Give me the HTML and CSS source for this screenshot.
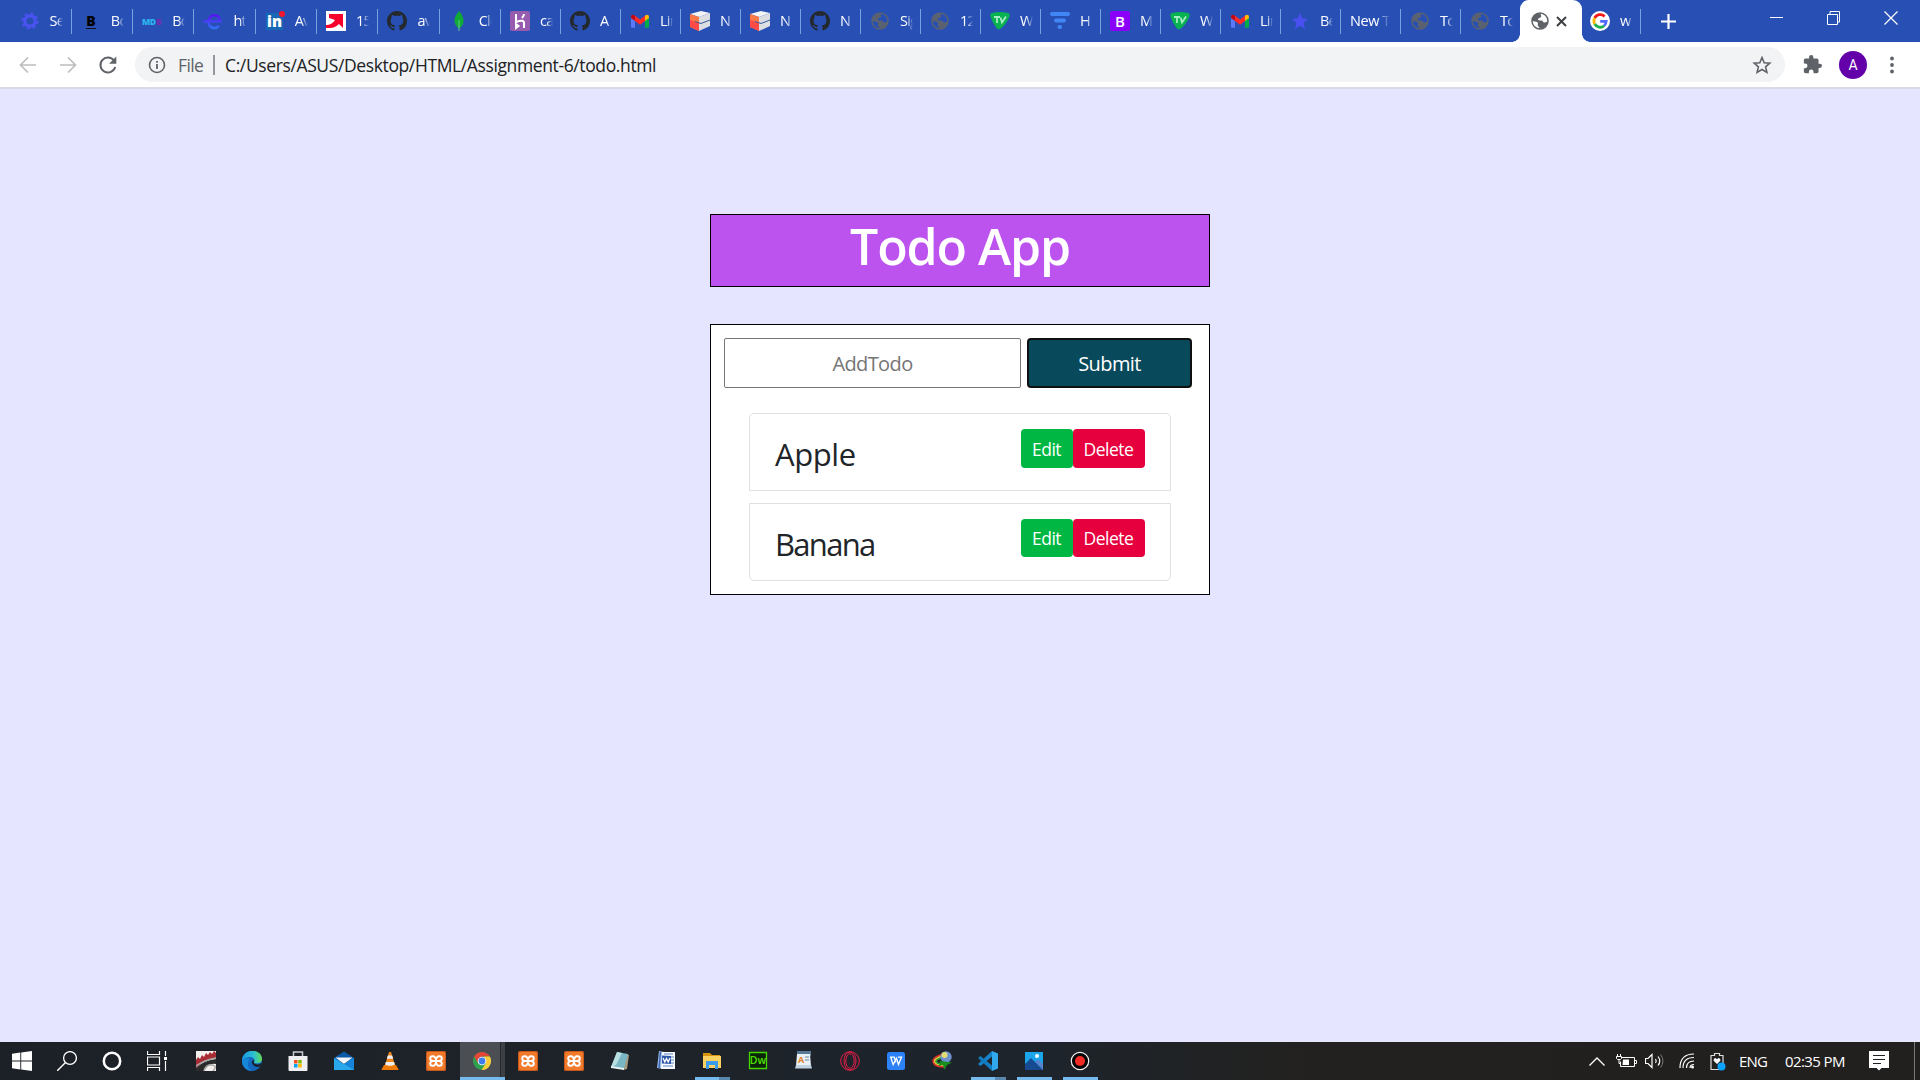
FILE: index.html
```html
<!DOCTYPE html>
<html lang="en">
<head>
<meta charset="utf-8">
<title>Todo App</title>
<link rel="stylesheet" href="styles.css">
</head>
<body>
<svg class="defs" aria-hidden="true">
  <symbol id="github" viewBox="0 0 16 16"><path fill="#24292e" d="M8 0C3.58 0 0 3.58 0 8c0 3.54 2.29 6.53 5.47 7.59.4.07.55-.17.55-.38 0-.19-.01-.82-.01-1.49-2.01.37-2.53-.49-2.69-.94-.09-.23-.48-.94-.82-1.13-.28-.15-.68-.52-.01-.53.63-.01 1.08.58 1.23.82.72 1.21 1.87.87 2.33.66.07-.52.28-.87.51-1.07-1.78-.2-3.64-.89-3.64-3.95 0-.87.31-1.59.82-2.15-.08-.2-.36-1.02.08-2.12 0 0 .67-.21 2.2.82.64-.18 1.32-.27 2-.27s1.36.09 2 .27c1.53-1.04 2.2-.82 2.2-.82.44 1.1.16 1.92.08 2.12.51.56.82 1.27.82 2.15 0 3.07-1.87 3.75-3.65 3.95.29.25.54.73.54 1.48 0 1.07-.01 1.93-.01 2.2 0 .21.15.46.55.38A8.01 8.01 0 0 0 16 8c0-4.42-3.58-8-8-8z"/></symbol>
  <symbol id="gmail" viewBox="0 0 20 20"><path fill="#5c78f8" d="M1 6l4 3v7.700H2.300Q1 16.700 1 15.400z"/><path fill="#00ac47" d="M19 6l-4 3v7.700h2.700q1.300 0 1.300-1.300z"/><path fill="#fe2c25" d="M5 4.700l5 3.800 5-3.800v5.200l-5 3.800-5-3.800z"/><path fill="#c00a14" d="M1 5.600C1 3.500 3.300 2.900 5 4.700v5.200L1 7z"/><path fill="#ffba00" d="M19 5.600c0-2.100-2.300-2.700-4-.9v5.200L19 7z"/></symbol>
  <symbol id="netbox" viewBox="0 0 20 20"><path fill="#f4f4f4" d="M0 3L11 0l9 2-11 4z"/><path fill="#ff7847" d="M0 3l9 3v14l-9-4z"/><path fill="#ff4b48" d="M0 9l9 3v8l-9-4z"/><path fill="#dcdee2" d="M9 6l11-4v13L9 20z"/><path d="M5 10.500l6 2 9-3.500" fill="none" stroke="#36589c"/></symbol>
  <symbol id="globe" viewBox="0 0 20 20"><circle cx="10" cy="10" r="8" fill="none" stroke="currentColor" stroke-width="1.500"/><path fill="currentColor" d="M11 2c-1 2 1 2.500 0 4-1 1.300-3 .6-3 2.300 0 1.300 2 1.200 3.500 1.200 1.600 0 1.300 2 3 2 1.500 0 2-1.500 3.500-1C17.500 14 14 18 9.500 18c.2-2-.8-2-1.500-3-.8-1.300.7-2.700-.6-3.700C6 10.300 3.700 11 2 9.500 2.300 5 6 1.500 11 2z"/></symbol>
  <symbol id="tv" viewBox="0 0 20 20"><path fill="#08b250" d="M2 2q8-2 16 0 2.500.8 1.500 3.500Q16 14 10 18q-2 1-3.500-1Q2 11 .3 5 0 2.500 2 2z"/><path d="M4 6h6M7 6v6M10.500 6.500l1.500 5 4-6" fill="none" stroke="#a8ecc6" stroke-width="1.800"/></symbol>
  <symbol id="xampp" viewBox="0 0 20 20"><rect width="20" height="20" rx="1.500" fill="#c9581c"/><rect x="1" y="1" width="18" height="18" rx="2" fill="#f27a2b"/><path d="M7 10Q4.200 9.800 4.200 7.500 4.200 5.200 6.500 5.200H7.200Q9 5.200 10 8.500 11 5.200 12.800 5.200H13.500Q15.800 5.200 15.800 7.500 15.800 9.800 13 10 15.800 10.200 15.800 12.500 15.800 14.800 13.500 14.800H12.800Q11 14.800 10 11.500 9 14.800 7.200 14.800H6.500Q4.200 14.800 4.200 12.500 4.200 10.200 7 10H13" fill="none" stroke="#fff" stroke-width="1.900"/></symbol>
</svg>

<header class="tabs">
  <div class="tab wide"><svg class="fav" viewBox="0 0 20 20"><circle cx="10" cy="10" r="5.200" fill="none" stroke="#4a52f0" stroke-width="3.200"/><circle cx="10" cy="10" r="7.500" fill="none" stroke="#4a52f0" stroke-width="2.200" stroke-dasharray="3.100 2.790"/></svg><span class="label">Settings</span></div>
  <div class="tab wide"><svg class="fav" viewBox="0 0 20 20"><text x="10" y="15" text-anchor="middle" font-size="14" font-weight="900" fill="#000">B</text><path d="M5 17.500h10" stroke="#111"/></svg><span class="label">Bootstrap</span></div>
  <div class="tab wide"><svg class="fav" viewBox="0 0 20 20"><text x="0" y="13.500" font-size="8.500" font-weight="800" letter-spacing="-.4"><tspan fill="#2cb5ee">MD</tspan><tspan fill="#702db0">B</tspan></text></svg><span class="label">Bootstrap</span></div>
  <div class="tab wide"><svg class="fav" viewBox="0 0 20 20"><defs><linearGradient id="eg" x2="0" y2="1"><stop stop-color="#5a10f5"/><stop offset="1" stop-color="#3372f6"/></linearGradient></defs><path d="M0 10.300H17.200A5.900 6.400 0 1 0 15.800 14.800" fill="none" stroke="url(#eg)" stroke-width="2.500"/></svg><span class="label">html</span></div>
  <div class="tab wide"><svg class="fav" viewBox="0 0 20 20"><rect x="1" y="2" width="17" height="17" fill="#1769b5"/><text x="2" y="16" font-size="15" font-weight="800" fill="#fff">in</text><circle cx="17" cy="3" r="3" fill="#f5152f"/></svg><span class="label">Avi</span></div>
  <div class="tab wide"><svg class="fav" viewBox="0 0 20 20"><path fill="#fff" d="M0 0h20v20H0z"/><path fill="#f8002c" d="M3 3h14v14l-4-4q-4 4-9 4H0v-3q6 0 9-5L3 7z"/></svg><span class="label">15</span></div>
  <div class="tab wide"><svg class="fav"><use href="#github"/></svg><span class="label">avi</span></div>
  <div class="tab wide"><svg class="fav" viewBox="0 0 20 20"><path fill="#10aa35" d="M10 0q4.500 5 4.500 10T10 17.500Q5.500 14 5.500 9.500T10 0z"/><path d="M10 9v11" stroke="#68c98a"/></svg><span class="label">Cloud</span></div>
  <div class="tab"><svg class="fav" viewBox="0 0 20 20"><rect width="20" height="20" rx="2" fill="#975bb0"/><path d="M6 3v8q8-3 8 1v5M14 3q0 2-2 4M6 13v4l2.500-2z" fill="none" stroke="#fff" stroke-width="2"/></svg><span class="label">can</span></div>
  <div class="tab"><svg class="fav"><use href="#github"/></svg><span class="label">A</span></div>
  <div class="tab"><svg class="fav"><use href="#gmail"/></svg><span class="label">Link</span></div>
  <div class="tab"><svg class="fav"><use href="#netbox"/></svg><span class="label">N</span></div>
  <div class="tab"><svg class="fav"><use href="#netbox"/></svg><span class="label">N</span></div>
  <div class="tab"><svg class="fav"><use href="#github"/></svg><span class="label">N</span></div>
  <div class="tab"><svg class="fav dim"><use href="#globe"/></svg><span class="label">Sig</span></div>
  <div class="tab"><svg class="fav dim"><use href="#globe"/></svg><span class="label">12</span></div>
  <div class="tab"><svg class="fav"><use href="#tv"/></svg><span class="label">W</span></div>
  <div class="tab"><svg class="fav" viewBox="0 0 20 20"><path d="M2 3h16M6 9.500h8M9.500 16h.6" stroke="#4285f4" stroke-width="4" stroke-linecap="round"/></svg><span class="label">H</span></div>
  <div class="tab"><svg class="fav" viewBox="0 0 20 20"><rect width="20" height="20" rx="2" fill="#8a00f8"/><text x="10" y="15.500" text-anchor="middle" font-size="15" font-weight="600" fill="#fff">B</text></svg><span class="label">M</span></div>
  <div class="tab"><svg class="fav"><use href="#tv"/></svg><span class="label">W</span></div>
  <div class="tab"><svg class="fav"><use href="#gmail"/></svg><span class="label">Link</span></div>
  <div class="tab"><svg class="fav" viewBox="0 0 20 20"><path fill="#4a50ef" d="M10 2l2.400 5.600 5.600.4-4.300 4 1.400 6L10 14.700 4.900 18l1.400-6L2 8l5.600-.4z"/></svg><span class="label">Best</span></div>
  <div class="tab"><span class="label long">New Tab</span></div>
  <div class="tab"><svg class="fav dim"><use href="#globe"/></svg><span class="label">Todo</span></div>
  <div class="tab last"><svg class="fav dim"><use href="#globe"/></svg><span class="label">Todo</span></div>
  <div class="tab active"><svg class="fav"><use href="#globe"/></svg><svg class="close" viewBox="0 0 11 11"><path d="M1 1l9 9M10 1l-9 9" stroke="#3c4043" stroke-width="2"/></svg></div>
  <div class="tab after"><svg class="fav" viewBox="0 0 20 20"><circle cx="10" cy="10" r="10" fill="#fff"/><g fill="none" stroke-width="2.800"><path d="M14.600 5.500A6.200 6.200 0 0 0 4.700 7" stroke="#f21818"/><path d="M4.700 7a6.200 6.200 0 0 0 0 6" stroke="#fbbc05"/><path d="M4.700 13a6.200 6.200 0 0 0 9.500 1.700" stroke="#20b050"/><path d="M14.200 14.700a6.500 6.500 0 0 0 2-4.400H10.200" stroke="#5068ff"/></g></svg><span class="label">w</span></div>
  <svg class="plus" viewBox="0 0 15 15"><path d="M7.500 0v15M0 7.500h15" stroke="#fff" stroke-width="2.200"/></svg>
  <div class="window">
    <svg width="13" height="14" viewBox="0 0 13 14"><path d="M0 6.500h13" stroke="#fff"/></svg>
    <svg width="13" height="14" viewBox="0 0 13 14"><path d="M.5 3.500h10v10H.5zM3 3.500v-3h9.500V11h-2" fill="none" stroke="#fff"/></svg>
    <svg width="14" height="14" viewBox="0 0 14 14"><path d="M.5.5l13 13M13.500.5l-13 13" stroke="#fff" stroke-width="1.200"/></svg>
  </div>
</header>

<nav class="toolbar">
  <svg class="nav" viewBox="0 0 20 20"><path d="M18 10H3M10 2.500L2.500 10l7.500 7.500" fill="none" stroke="#bbbdc0" stroke-width="1.700"/></svg>
  <svg class="nav" viewBox="0 0 20 20"><path d="M2 10h15M10 2.500l7.500 7.500-7.500 7.500" fill="none" stroke="#bbbdc0" stroke-width="1.700"/></svg>
  <svg class="nav" viewBox="0 0 20 20"><path d="M16 5.500A7.500 7.500 0 1 0 17.200 12" fill="none" stroke="#5f6368" stroke-width="2"/><path fill="#5f6368" d="M18.300 1.500v7.200h-7.200z"/></svg>
  <div class="omnibox">
    <svg class="info" viewBox="0 0 18 18"><circle cx="9" cy="9" r="7.500" fill="none" stroke="#5f6368" stroke-width="1.600"/><path d="M9 8v5M9 5v1.800" stroke="#5f6368" stroke-width="1.800"/></svg>
    <span class="scheme">File</span><i class="bar"></i><span class="url">C:/Users/ASUS/Desktop/HTML/Assignment-6/todo.html</span>
    <svg class="star" viewBox="0 0 20 20"><path d="M10 2.500l2.200 5.200 5.600.5-4.200 3.700 1.300 5.500L10 14.500l-4.900 2.900 1.300-5.500-4.200-3.700 5.600-.5z" fill="none" stroke="#5f6368" stroke-width="1.600"/></svg>
  </div>
  <svg class="puzzle" viewBox="1 1 22 22"><path fill="#5f6368" d="M20.500 11H19V7c0-1.100-.9-2-2-2h-4V3.500a2.500 2.500 0 0 0-5 0V5H4c-1.100 0-2 .9-2 2v3.800h1.500a2.700 2.700 0 0 1 0 5.400H2V20c0 1.100.9 2 2 2h3.800v-1.500a2.700 2.700 0 0 1 5.400 0V22H17c1.100 0 2-.9 2-2v-4h1.500a2.500 2.500 0 0 0 0-5z"/></svg>
  <span class="avatar">A</span>
  <svg class="dots" viewBox="0 0 4 18"><g fill="#5f6368"><circle cx="2" cy="2.500" r="1.900"/><circle cx="2" cy="9" r="1.900"/><circle cx="2" cy="15.500" r="1.900"/></g></svg>
</nav>

<main class="page">
  <h1 class="title">Todo App</h1>
  <section class="card">
    <form class="entry"><input class="field" placeholder="AddTodo"><button class="submit" type="button">Submit</button></form>
    <ul class="list">
      <li class="item"><span class="name">Apple</span><div class="actions"><button class="btn edit">Edit</button><button class="btn delete">Delete</button></div></li>
      <li class="item"><span class="name tight">Banana</span><div class="actions"><button class="btn edit">Edit</button><button class="btn delete">Delete</button></div></li>
    </ul>
  </section>
</main>

<footer class="taskbar">
  <div class="system">
    <div class="sys"><svg viewBox="0 0 20 20"><path fill="#fff" d="M0 2.800L8.300 1.600v7.900H0zM9.200 1.500L20 0v9.500H9.200zM0 10.400h8.300v8L0 17.200zM9.200 10.400H20V20L9.200 18.500z"/></svg></div>
    <div class="sys"><svg viewBox="0 0 20 20"><circle cx="13" cy="7" r="6.400" fill="none" stroke="#fff" stroke-width="1.300"/><path d="M8.500 11.500L0 20" stroke="#fff" stroke-width="1.400"/></svg></div>
    <div class="sys"><svg viewBox="0 0 20 20"><circle cx="10" cy="10" r="8.200" fill="none" stroke="#fff" stroke-width="2.500"/></svg></div>
    <div class="sys"><svg viewBox="0 0 20 20"><path d="M.5 0v3.500h12V0M.5 20v-3.500h12V20M.5 6h12v8H.5zM18.500 0v5M18.500 10v10" fill="none" stroke="#fff" stroke-width="1.200"/><path fill="#fff" d="M17 6h3v3h-3z"/></svg></div>
  </div>
  <div class="apps">
    <div class="app"><svg viewBox="0 0 20 20"><path fill="#f4f0ee" d="M0 0h20v20H0z"/><path fill="#a82c34" d="M0 9l2-3 2 2 2-4 2 2 2-4 2 2 2-3 2 2 2-3 2 2v5L8 10l-8 7z"/><path fill="#2b2b2c" d="M0 17q8-8 20-9v5q-7-2-12 7H0z"/><path d="M8 20q2-7 8-6t1 6M0 15q8-6 20-8" fill="none" stroke="#aaa" stroke-width="1.500"/></svg></div>
    <div class="app"><svg viewBox="0 0 20 20"><defs><linearGradient id="ed"><stop stop-color="#1897e6"/><stop offset=".6" stop-color="#2dc1cf"/><stop offset="1" stop-color="#62dc55"/></linearGradient></defs><circle cx="10" cy="10" r="10" fill="#1268bf"/><path fill="url(#ed)" d="M0 10C0-3.500 20-3 20 8c0 4-4 5-7.500 4-1.500-.5 0-1.500 0-3C12 5 4 4.500 0 10z"/><path fill="#1d202a" d="M12.300 9.500c0 1.500-1.300 2 .2 3 2.500 1.600 5.500 1 7.200-.7-.2 2-1.200 3.500-1.500 3.700-4 1.700-8.700-1.500-8.200-4.500.2-1.500 1.300-2 2.300-1.500z"/><path fill="#1687d8" d="M0 10c0 5.500 4 10 10 10-4-2-5.500-8-2-12-3-1.500-6.500-.5-8 2z"/></svg></div>
    <div class="app"><svg viewBox="0 0 20 20"><path d="M5.500 6V1h9v5" fill="none" stroke="#c9c9ce" stroke-width="1.500"/><path fill="#f0f0f2" d="M.5 5h19v14q0 1-1 1h-17q-1 0-1-1z"/><path fill="#f25022" d="M6 9h3.500v3.500H6z"/><path fill="#7fba00" d="M10.200 9h3.500v3.500h-3.500z"/><path fill="#00a4ef" d="M6 13h3.500v3.500H6z"/><path fill="#ffb900" d="M10.200 13h3.500v3.500h-3.500z"/></svg></div>
    <div class="app"><svg viewBox="0 0 20 20"><path fill="#0a5aa8" d="M0 7l10-6.500L20 7v4H0z"/><path fill="#f4f7fa" d="M1.500 6.500h17L10 13z"/><path fill="#28a8ea" d="M0 7l10 6 10-6v12H0z"/><path fill="#1784d8" d="M20 7v12l-10-6z"/></svg></div>
    <div class="app"><svg viewBox="0 0 20 20"><path fill="#f07a08" d="M4 14h12l2.500 4.500q0 .5-1 .5h-15q-1 0-1-.5z"/><path fill="#f38718" d="M9 1h2l4 13q-5 3.500-10 0z"/><path fill="#eee" d="M7.800 4.500h4.400l1 3.200H6.800zM5.900 11h8.200l.8 2.500q-4.900 2.500-9.800 0z"/></svg></div>
    <div class="app"><svg><use href="#xampp"/></svg></div>
    <div class="app current"><svg viewBox="0 0 20 20"><circle cx="10" cy="10" r="9" fill="#30a14e"/><path fill="#e24636" d="M2.200 5.500A9 9 0 0 1 17.800 5.500H10L6 12z"/><path fill="#fccb38" d="M17.800 5.500A9 9 0 0 1 9.500 19L14 12 12 5.500z"/><circle cx="10" cy="10" r="4.300" fill="#fff"/><circle cx="10" cy="10" r="3.400" fill="#3f7cec"/></svg></div>
    <div class="app"><svg><use href="#xampp"/></svg></div>
    <div class="app"><svg><use href="#xampp"/></svg></div>
    <div class="app"><svg viewBox="0 0 20 20"><path fill="#a9997c" d="M16 3l3 1-2 14-4 1z"/><path fill="#78b7c3" d="M7 1l11 2-4 15-13-2z"/><path fill="#b9dfe3" d="M7 1l5 1-6 12-5 2z"/><path fill="#e7f3f2" d="M1 15l13 2v2L1 17z"/></svg></div>
    <div class="app"><svg viewBox="0 0 20 20"><path fill="#9dbbe8" d="M3 0l5 1-1 17-6-1z"/><path fill="#f6f9fe" d="M6 1h13v17H5z"/><path d="M4.500 1L3 17" stroke="#3e69b4" stroke-width="1.500"/><path d="M8 3h9M15 6h3M15 9h3M15 12h3M7 15h10" stroke="#5d83c4" stroke-width="1.200"/><path fill="#2d57a7" d="M6 4.500l9 .5v8l-9-.500z"/><path d="M7 7l1.800 4 1.700-3.500L12.200 11 14 7" fill="none" stroke="#fff" stroke-width="1.300"/></svg></div>
    <div class="app open split"><svg viewBox="0 0 20 20"><path fill="#d8940c" d="M1 2h7l2 2h8v4H1z"/><path fill="#fbd162" d="M1 5h18v12H1z"/><path fill="#3a9cea" d="M4 10h12v8h-3v-4H7v4H4z"/></svg></div>
    <div class="app"><svg viewBox="0 0 20 20"><path fill="#0a2408" stroke="#44d800" stroke-width="1.300" d="M1.500 1.500h17v16h-17z"/><text x="10" y="13" text-anchor="middle" font-size="10.500" font-weight="600" fill="#52e000">Dw</text></svg></div>
    <div class="app"><svg viewBox="0 0 20 20"><path fill="#5a7996" d="M3 0h14v5H3z"/><path fill="#e9f0f6" d="M3 3h13l1 12H2z"/><text x="4" y="12" font-size="9" font-weight="700" fill="#e27d24">A</text><path d="M11 6h4M11 9h4" stroke="#6b8ba7"/><path fill="#c1d3e1" d="M2 14h15l1 3.500H1z"/></svg></div>
    <div class="app"><svg viewBox="0 0 20 20"><g fill="none" stroke="#e91e4a"><circle cx="10" cy="10" r="9.300"/><ellipse cx="10" cy="10" rx="6" ry="9"/><ellipse cx="10" cy="10" rx="4.200" ry="7.300"/></g></svg></div>
    <div class="app"><svg viewBox="0 0 20 20"><rect x="1" y="1" width="18" height="18" rx="2.500" fill="#2c82f6"/><path d="M4 6.200h4.200l1.600 5M4.800 6.500l2.400 7 3.300-6.300 2 6.300 3-7.300h-3.500" fill="none" stroke="#fff" stroke-width="1.300"/></svg></div>
    <div class="app"><svg viewBox="0 0 20 20"><g fill="none" stroke-width="1.600"><path d="M10 3.500Q.8 6 1 10.500 1.500 15.500 12 16" stroke="#e4332e"/><path d="M10 5Q2.500 7.500 2.600 10.500 3 14 12 14.500" stroke="#f8d634"/><path d="M10 6.500Q4 8.500 4.200 10.700 5 13 12 13.300" stroke="#2fa43a"/></g><circle cx="14" cy="6" r="5.700" fill="#6d91cf"/><circle cx="12.500" cy="4" r="3" fill="#e4dc70"/><path fill="#188f1d" d="M8 10l12 1.500-5 2.500-2.500 5-1.500-5-4 1z"/></svg></div>
    <div class="app open split"><svg viewBox="0 0 20 20"><path fill="#1683ca" d="M14 0v5.500L2.500 15 .5 13.500v-1z"/><path fill="#137bc0" d="M14 20v-5.500L2.500 5 .5 6.500v1z"/><path fill="#31a8ee" d="M14 0l6 2.500v15L14 20z"/></svg></div>
    <div class="app open"><svg viewBox="0 0 20 20"><path fill="#1aa5ea" d="M1 1h18v18H1z"/><path fill="#5484cf" d="M9 13l5-5 5 5v6H7z"/><path fill="#164b92" d="M1 13l6-6 12 12H1z"/><circle cx="13" cy="5" r="2" fill="#fff"/></svg></div>
    <div class="app open"><svg viewBox="0 0 20 20"><circle cx="10" cy="10" r="8.700" fill="#050505" stroke="#f5f5f5" stroke-width="1.200"/><circle cx="10" cy="10" r="5" fill="#f12a25"/></svg></div>
  </div>
  <div class="tray">
    <svg class="chev" viewBox="0 0 16 9"><path d="M.5 8.500L8 1l7.500 7.500" fill="none" stroke="#fff" stroke-width="1.300"/></svg>
    <svg class="batt" viewBox="0 0 21 14"><path d="M6 3.500h12.500v9H4.500v-5M18.500 6.500h2v3h-2M1.500 0v2M4.500 0v2M.5 2.500h5v2l-1 1h-3l-1-1zM3 6v3.500h2" fill="none" stroke="#fff"/><path fill="#fff" d="M7 5.500h6V11H6.500z"/></svg>
    <svg class="speaker" viewBox="0 0 21 18"><path d="M.5 6.500H3l4-4v13l-4-4H.5z" fill="none" stroke="#fff" stroke-width="1.200"/><path d="M10.500 7q1.500 2 0 4M13 4.500q3.500 4.500 0 9" fill="none" stroke="#fff" stroke-width="1.200"/><path d="M15.500 2.500q5 6.500 0 13" fill="none" stroke="#777"/></svg>
    <svg class="wifi" viewBox="0 0 16 16"><g fill="none" stroke="#fff" stroke-width="1.200"><path d="M1 15Q1 1 15 1M4 15Q4 4.500 15 4.500M7.500 15Q7.500 8 15 8"/><path d="M11 15q0-3.500 4-3.500"/></g><circle cx="13.500" cy="14" r="1.500" fill="#fff"/></svg>
    <svg class="health" viewBox="0 0 16 19"><path d="M1 3.500h3.500v-2h5v2H13v14H1z" fill="none" stroke="#ddd" stroke-width="1.200"/><path fill="#fff" d="M7 12L3.500 8.500q0-2.500 2-2.500L7 7.200 8.500 6q2 0 2 2.500z"/><circle cx="11.500" cy="14.500" r="4" fill="#08a4ff"/></svg>
    <span class="lang">ENG</span><span class="clock">02:35 PM</span>
    <svg class="notice" viewBox="0 0 20 20"><path fill="#fff" d="M0 0h20v17h-7.500L10 19.500 7.500 17H0z"/><path d="M4 4.500h12M4 8.500h12M4 12.500h8" stroke="#232020" stroke-width="1.200"/></svg>
    <i class="edge"></i>
  </div>
</footer>
</body>
</html>
```
FILE: styles.css
```css
* { box-sizing: border-box; }
body {
  margin: 0;
  width: 1920px;
  height: 1080px;
  overflow: hidden;
  display: flex;
  flex-direction: column;
  background: #e5e5ff;
  font-family: "Open Sans", "Noto Sans", sans-serif;
}
svg { display: block; flex: none; }
.defs { display: none; }

.tabs { height: 42px; flex: none; display: flex; padding-left: 10.5px; background: #2850b4; color: #fff; }
.tab { width: 60px; height: 42px; flex: none; display: flex; align-items: center; padding-left: 9px;
  background: linear-gradient(#74a4dd, #74a4dd) right 9px / 1px 25px no-repeat; }
.wide { width: 61.32px; }
.fav { width: 20px; height: 20px; }
.dim { color: #5a6170; }
.label { width: 13px; margin-left: 10px; overflow: hidden; white-space: nowrap; font-size: 14.5px; letter-spacing: -.8px; line-height: 24px;
  -webkit-mask-image: linear-gradient(90deg, #000 50%, transparent); mask-image: linear-gradient(90deg, #000 50%, transparent); }
.long { width: 40px; margin-left: 0; letter-spacing: -.4px; -webkit-mask-image: linear-gradient(90deg, #000 68%, transparent); mask-image: linear-gradient(90deg, #000 68%, transparent); }
.last { background: none; }
.active { position: relative; width: 62px; margin-left: -1px; background: #fff; border-radius: 9px 9px 0 0; color: #5f6368; padding-left: 10px; }
.active::before, .active::after { content: ""; position: absolute; bottom: 0; width: 8px; height: 8px; }
.active::before { left: -8px; background: radial-gradient(circle at 0 0, transparent 7.5px, #fff 8px); }
.active::after { right: -8px; background: radial-gradient(circle at 100% 0, transparent 7.5px, #fff 8px); }
.close { width: 11px; height: 11px; margin-left: 6px; }
.after { width: 59px; padding-left: 8px; }
.plus { width: 15px; height: 15px; margin: 14px 0 0 20px; }
.window { display: flex; gap: 44px; margin: 11px 22px 0 auto; }

.toolbar { height: 47px; flex: none; display: flex; align-items: center; padding: 0 26px 0 18px; background: #fff; border-bottom: 2px solid #d9dae3; }
.nav { width: 20px; height: 20px; margin-right: 20px; }
.omnibox { width: 1650px; height: 35px; margin-left: -3px; display: flex; align-items: center; padding: 0 13px; border-radius: 18px; background: #f1f3f4; font-size: 17.5px; white-space: nowrap; }
.info { width: 18px; height: 18px; }
.scheme { width: 26px; margin-left: 12px; color: #5f6368; letter-spacing: -.6px; }
.bar { width: 2px; height: 20px; margin-left: 9px; background: #94979b; }
.url { margin-left: 10px; color: #202124; letter-spacing: -.38px; }
.star { width: 20px; height: 20px; margin-left: auto; }
.puzzle { width: 19px; height: 19px; margin-left: 18px; }
.avatar { width: 28px; height: 28px; margin-left: 17px; border-radius: 50%; background: #6400aa; color: #fff; font: 14px/28px Roboto, sans-serif; text-align: center; }
.dots { width: 4px; height: 18px; margin-left: auto; }

.page { flex: 1; display: flex; flex-direction: column; align-items: center; padding-top: 125px; }
.title { width: 500px; height: 73px; margin: 0; border: 1px solid #000; background: #bc53ee; color: #fff; font-size: 50px; line-height: 63px; font-weight: 600; text-align: center; letter-spacing: -1.1px; }
.card { width: 500px; height: 271px; margin-top: 37px; border: 1px solid #000; background: #fff; padding: 13px; }
.entry { display: flex; gap: 6px; height: 50px; }
.field { width: 297px; border: 1px solid #767676; border-radius: 2px; padding: 1px 0 0; background: #fff; font: 20px "Open Sans", sans-serif; letter-spacing: -.6px; text-align: center; }
.field::placeholder { color: #757575; opacity: 1; }
.submit { width: 165px; padding: 1px 0 0; border: 2px solid #101010; border-radius: 4px; background: #084a5b; color: #fff; font: 20px "Open Sans", sans-serif; letter-spacing: -.6px; }
.list { list-style: none; margin: 25px 25px 0; padding: 0; display: flex; flex-direction: column; gap: 12px; width: 422px; }
.item { height: 78px; display: flex; justify-content: space-between; padding: 15px 25px 0; border: 1px solid #dfdfdf; }
.item:first-child { border-radius: 5px 5px 0 0; }
.item:last-child { border-radius: 0 0 5px 5px; }
.name { color: #212529; font-size: 31px; line-height: 50px; letter-spacing: -.4px; }
.tight { letter-spacing: -1.7px; }
.actions { display: flex; height: 39px; }
.item:last-child .actions { height: 38px; }
.btn { border: 0; border-radius: 4px; padding: 0 1px 0 0; color: #fff; font: 17.5px "Open Sans", sans-serif; letter-spacing: -.5px; }
.edit { width: 52px; background: #00b744; }
.delete { width: 72px; background: #e6003d; }

.taskbar { height: 38px; flex: none; display: flex; background: linear-gradient(90deg, #1c2127, #1e242b 55%, #22211f 68%, #221f1f); color: #fff; }
.system { display: flex; width: 183px; }
.sys { width: 45px; padding-right: 1px; display: flex; align-items: center; justify-content: center; }
.sys svg, .app svg { width: 20px; height: 20px; }
.apps { display: flex; }
.app { width: 46px; display: flex; align-items: center; justify-content: center; }
.open { background: linear-gradient(#76b9ed, #76b9ed) 6px bottom / 35px 3px no-repeat; }
.split { background: linear-gradient(90deg, #76b9ed 24px, #5888ad 24px) 6px bottom / 35px 3px no-repeat; }
.current { background: linear-gradient(#76b9ed, #76b9ed) 1px bottom / 45px 3px no-repeat, linear-gradient(90deg, #4b4f53 40px, #25292d 40px, #25292d 41px, #3c4045 41px) 1px 0 / 45px 100% no-repeat; }
.tray { margin-left: auto; display: flex; align-items: center; font-size: 15px; white-space: nowrap; }
.chev { width: 16px; height: 9px; }
.batt { width: 21px; height: 14px; margin-left: 11px; }
.speaker { width: 21px; height: 18px; margin-left: 8px; }
.wifi { width: 16px; height: 16px; margin-left: 13px; }
.health { width: 16px; height: 19px; margin-left: 15px; }
.lang { width: 28px; margin-left: 13px; letter-spacing: -.8px; }
.clock { width: 60px; margin-left: 18px; letter-spacing: -.6px; }
.notice { width: 20px; height: 20px; margin-left: 24px; }
.edge { width: 1px; height: 38px; margin: 0 5px 0 25px; background: #777; }
```
